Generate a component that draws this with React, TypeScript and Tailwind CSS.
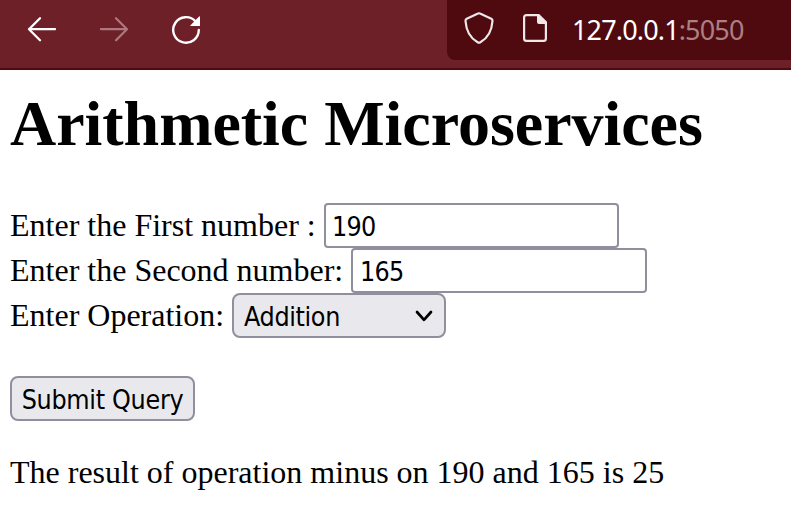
import React from 'react';

const field =
  "h-[45px] rounded-[4px] border-2 border-[#8f8f9d] bg-white pt-[2px] font-['DejaVu_Sans_Condensed','DejaVu_Sans',sans-serif] font-stretch-condensed text-[26.6px] tracking-[-0.7px] leading-[39px] outline-none";

function Toolbar() {
  return (
    <header className="flex h-[70px] items-start border-b-2 border-[#4f0a10] bg-[#6e2029]">
      <div className="flex w-[447px] shrink-0 pt-[15px] pl-[27px]">
        <svg width="30" height="30" viewBox="0 0 30 30" fill="none" stroke="#fff" strokeWidth="2.3" strokeLinecap="round" strokeLinejoin="round">
          <path d="M28 14.2H2M13 3.2 2 14.2l11 11" />
        </svg>
        <svg className="ml-[42px]" width="30" height="30" viewBox="0 0 30 30" fill="none" stroke="#ac777d" strokeWidth="2.3" strokeLinecap="round" strokeLinejoin="round">
          <path d="M2 14.2h26M17 3.2l11 11-11 11" />
        </svg>
        <svg className="ml-[42px]" width="32" height="32" viewBox="0 0 32 32" fill="none">
          <path d="M27.8 15A12.8 12.8 0 1 1 24.7 6.6" stroke="#fff" strokeWidth="2.4" strokeLinecap="round" />
          <path d="M28.1 1.6q.9-.8.9.4v9.1h-9.1q-1.2 0-.4-.9z" fill="#fff" />
        </svg>
      </div>
      <div className="flex h-[60px] flex-1 rounded-bl-[8px] bg-[#4f0a10] pl-[16px]">
        <svg className="mt-[11px] shrink-0" width="32" height="34" viewBox="0 0 32 34" fill="none" stroke="#f0e7e8" strokeWidth="2.2" strokeLinejoin="round">
          <path d="M15 2.5Q16 2 17 2.5L28.3 7.7Q29.6 8.4 29.5 10C28.8 20 25 27 17.4 31.2Q16 32 14.6 31.2C7 27 3.2 20 2.5 10Q2.4 8.4 3.7 7.7Z" />
        </svg>
        <svg className="mt-[13px] ml-[27px] shrink-0" width="28" height="30" viewBox="0 0 28 30" fill="none">
          <path d="M15.5 2.1H4.5Q2.1 2.1 2.1 4.5V25.5Q2.1 27.9 4.5 27.9H21.5Q23.9 27.9 23.9 25.5V10" stroke="#f0e7e8" strokeWidth="2.2" />
          <path d="M15 1H17.2L25 8.8V11H17Q15 11 15 9Z" fill="#f0e7e8" />
        </svg>
        <div className="ml-[22px] pt-[10px] font-['Noto_Sans',sans-serif] text-[27px] leading-[40px] tracking-[-0.85px] text-white">
          127.0.0.1<span className="text-[#ac7f83]">:5050</span>
        </div>
      </div>
    </header>
  );
}

export default function App() {
  return (
    <div className="h-[518px] w-[791px] overflow-hidden bg-white font-['Liberation_Serif',serif] text-[32px] leading-[45px] text-black">
      <Toolbar />
      <main className="pl-[10px]">
        <h1 className="pt-[17px] text-[64px] leading-[74px] font-bold tracking-[-0.03px] whitespace-nowrap">Arithmetic Microservices</h1>
        <form className="pt-[42px]" onSubmit={(e) => e.preventDefault()}>
          <div className="flex h-[45px]">
            <label htmlFor="first" className="w-[314px] shrink-0 whitespace-nowrap">Enter the First number :</label>
            <input id="first" defaultValue="190" className={field + ' w-[295px] pl-[6px]'} />
          </div>
          <div className="flex h-[45px]">
            <label htmlFor="second" className="w-[341px] shrink-0 whitespace-nowrap">Enter the Second number:</label>
            <input id="second" defaultValue="165" className={field + ' w-[296px] pl-[7px]'} />
          </div>
          <div className="flex h-[45px]">
            <label htmlFor="operation" className="w-[222px] shrink-0 whitespace-nowrap">Enter Operation:</label>
            <div className="relative">
              <select id="operation" className="block h-[45px] w-[214px] appearance-none rounded-[8px] border-2 border-[#8f8f9d] bg-[#e9e9ed] pt-[2px] pl-[10px] font-['DejaVu_Sans_Condensed','DejaVu_Sans',sans-serif] font-stretch-condensed text-[26.6px] leading-[39px] tracking-[-0.35px]">
                <option>Addition</option>
                <option>Subtraction</option>
                <option>Multiplication</option>
                <option>Division</option>
              </select>
              <svg className="pointer-events-none absolute top-[17px] right-[13px]" width="18" height="13" viewBox="0 0 18 13" fill="none" stroke="#000" strokeWidth="2.7" strokeLinecap="round" strokeLinejoin="round">
                <path d="m2 2 7 7.8L16 2" />
              </svg>
            </div>
          </div>
          <button className="mt-[38px] block h-[45px] w-[185px] rounded-[8px] border-2 border-[#8f8f9d] bg-[#e9e9ed] pt-[2px] font-['DejaVu_Sans_Condensed','DejaVu_Sans',sans-serif] font-stretch-condensed text-[26.6px] leading-[39px] tracking-[-0.3px] whitespace-nowrap">
            Submit Query
          </button>
        </form>
        <p className="pt-[29px] whitespace-nowrap">The result of operation minus on 190 and 165 is 25</p>
      </main>
    </div>
  );
}
